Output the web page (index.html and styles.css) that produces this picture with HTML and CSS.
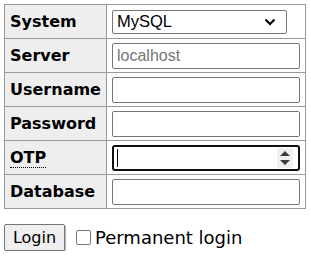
FILE: index.html
```html
<!DOCTYPE html>
<html lang="en">
<head>
    <meta charset="UTF-8">
    <title>Login</title>
    <link rel="stylesheet" href="styles.css">
</head>
<body>
    <form class="login">
        <table class="layout">
            <tr>
                <th>System</th>
                <td>
                    <div class="select">
                        <span>MySQL</span>
                        <svg class="chevron" width="12" height="8" viewBox="0 0 12 8"><path d="M1.5 1.5 L6 6 L10.5 1.5" fill="none" stroke="#000" stroke-width="2.2"/></svg>
                    </div>
                </td>
            </tr>
            <tr>
                <th>Server</th>
                <td><input class="field" type="text" placeholder="localhost"></td>
            </tr>
            <tr>
                <th>Username</th>
                <td><input class="field" type="text"></td>
            </tr>
            <tr>
                <th>Password</th>
                <td><input class="field" type="password"></td>
            </tr>
            <tr>
                <th><abbr class="hint" title="One-time password">OTP</abbr></th>
                <td>
                    <div class="otp">
                        <span class="caret"></span>
                        <span class="spin">
                            <svg width="10" height="16" viewBox="0 0 10 16"><path d="M5 1 L10 6 L0 6 Z M0 10 L10 10 L5 15 Z" fill="#3b3b3b"/></svg>
                        </span>
                    </div>
                </td>
            </tr>
            <tr>
                <th>Database</th>
                <td><input class="field" type="text"></td>
            </tr>
        </table>
        <div class="actions">
            <button type="button" class="btn">Login</button>
            <label class="perm"><span class="box"></span>Permanent login</label>
        </div>
    </form>
</body>
</html>
```

FILE: styles.css
```css
body {
    margin: 4px;
    font-family: "DejaVu Sans", Verdana, sans-serif;
    font-size: 16px;
    color: #000;
    background: #fff;
}
.layout {
    border-collapse: collapse;
    border: 1px solid #999;
    width: 302px;
}
.layout th, .layout td {
    border: 1px solid #999;
    height: 33px;
    padding: 0 5px;
}
.layout th {
    background: #eee;
    text-align: left;
    font-weight: bold;
    width: 92px;
}
.field {
    display: block;
    box-sizing: border-box;
    width: 188px;
    height: 26px;
    border: 1px solid #767676;
    border-radius: 2px;
    padding: 0 4px;
    font-family: "Liberation Sans", Arial, sans-serif;
    font-size: 16px;
}
.field::placeholder {
    color: #757575;
}
.select {
    display: flex;
    align-items: center;
    justify-content: space-between;
    box-sizing: border-box;
    width: 175px;
    height: 24px;
    border: 1px solid #767676;
    border-radius: 2px;
    padding: 0 10px 0 4px;
    font-family: "Liberation Sans", Arial, sans-serif;
    font-size: 16.5px;
}
.otp {
    display: flex;
    align-items: center;
    justify-content: space-between;
    box-sizing: border-box;
    width: 188px;
    height: 26px;
    border: 2px solid #101010;
    border-radius: 3px;
    padding: 0 5px 0 3px;
}
.caret {
    width: 1px;
    height: 18px;
    background: #000;
}
.spin {
    display: flex;
    align-items: center;
    justify-content: center;
    width: 16px;
    height: 20px;
    background: #efefef;
}
.hint {
    text-decoration: none;
    border-bottom: 1px dotted #000;
}
.actions {
    display: flex;
    align-items: center;
    gap: 11px;
    margin-top: 15px;
}
.btn {
    box-sizing: border-box;
    width: 61px;
    height: 27px;
    padding: 0;
    margin: 0;
    border: 1px solid #767676;
    border-radius: 2px;
    background: #efefef;
    box-shadow: 1px 1px 1px rgba(0, 0, 0, 0.3);
    font-family: "DejaVu Sans", Verdana, sans-serif;
    font-size: 16px;
    color: #000;
}
.perm {
    display: flex;
    align-items: center;
    gap: 4px;
    font-size: 18px;
}
.box {
    box-sizing: border-box;
    width: 15px;
    height: 15px;
    border: 1px solid #767676;
    border-radius: 2px;
}
```
